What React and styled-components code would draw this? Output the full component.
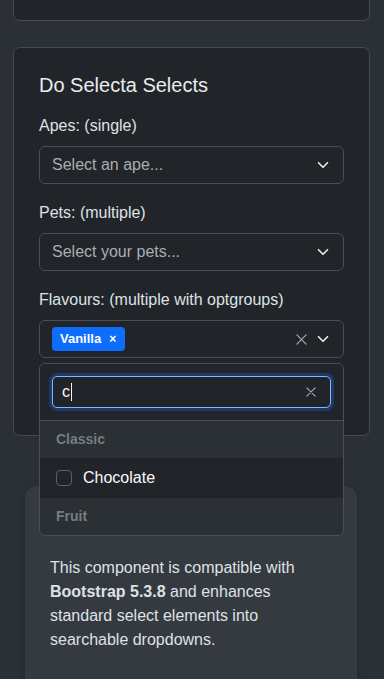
import React from 'react';
import styled, { createGlobalStyle } from 'styled-components';

const GlobalStyle = createGlobalStyle`
  html, body {
    margin: 0;
    padding: 0;
    background-color: #2b3037;
  }
  body {
    font-family: "Liberation Sans", Arial, sans-serif;
    color: #dee2e6;
    font-size: 16px;
    line-height: 1.5;
  }
`;

const Page = styled.div`
  padding: 1px 14px 0 13px;
  height: 679px;
  box-sizing: border-box;
  overflow: hidden;
`;

const Card = styled.div`
  background-color: #212529;
  border: 1px solid #454a50;
  border-radius: 7px;
  box-sizing: border-box;
`;

// the card above, scrolled mostly out of view
const PrevCard = styled(Card)`
  height: 61px;
  margin-top: -41px;
  margin-bottom: 26px;
`;

const CardBody = styled.div`
  padding: 25px 25px 77px 25px;
`;

const Title = styled.h5`
  margin: 0 0 17px 0;
  font-size: 20px;
  font-weight: 500;
  line-height: 24px;
  color: #e9ecef;
`;

const Field = styled.div`
  position: relative;
  margin-bottom: ${({ last }) => (last ? '0' : '17px')};
`;

const Label = styled.label`
  display: block;
  margin-bottom: 8px;
  line-height: 24px;
  color: #dee2e6;
`;

const SelectBox = styled.div`
  height: 38px;
  box-sizing: border-box;
  border: 1px solid #4a4f55;
  border-radius: 6px;
  background-color: #212529;
  display: flex;
  align-items: center;
  padding: 0 14px 0 12px;
  gap: 10px;
`;

const Placeholder = styled.span`
  flex: 1;
  color: #a9adb2;
`;

const Tags = styled.div`
  flex: 1;
  display: flex;
  align-items: center;
`;

const Tag = styled.span`
  display: inline-flex;
  align-items: center;
  height: 24px;
  padding: 0 9px 0 8px;
  gap: 8px;
  border-radius: 4px;
  background-color: #0d6efd;
  color: #ffffff;
  font-size: 13px;
  font-weight: 700;
`;

const TagX = styled.span`
  font-size: 12px;
  font-weight: 700;
  line-height: 1;
`;

const IconBtn = styled.span`
  display: inline-flex;
  align-items: center;
  justify-content: center;
  color: ${({ muted }) => (muted ? '#a3a8ad' : '#e9ecef')};
`;

const Dropdown = styled.div`
  position: absolute;
  top: calc(100% + 5px);
  left: 0;
  right: 0;
  z-index: 10;
  border: 1px solid #4a4f55;
  border-radius: 6px;
  background-color: #2b3035;
  overflow: hidden;
`;

const SearchArea = styled.div`
  padding: 12px;
  background-color: #212529;
  border-bottom: 1px solid #4a4f55;
`;

const SearchInput = styled.div`
  height: 32px;
  box-sizing: border-box;
  border: 1px solid #86b7fe;
  border-radius: 5px;
  box-shadow: 0 0 0 3px rgba(13, 110, 253, 0.3);
  background-color: #212529;
  display: flex;
  align-items: center;
  padding: 0 14px 0 9px;
  color: #f8f9fa;
`;

const Typed = styled.span`
  flex: 1;
  display: flex;
  align-items: center;
  &::after {
    content: '';
    display: inline-block;
    width: 1px;
    height: 18px;
    margin-left: 1px;
    background-color: #f8f9fa;
  }
`;

const GroupHeader = styled.div`
  height: 37px;
  display: flex;
  align-items: center;
  padding: 0 16px;
  font-size: 14px;
  font-weight: 700;
  color: #777c83;
`;

const Option = styled.div`
  height: 40px;
  display: flex;
  align-items: center;
  gap: 11px;
  padding: 0 16px;
  background-color: ${({ active }) => (active ? '#212529' : 'transparent')};
  color: #f8f9fa;
`;

const Check = styled.span`
  width: 16px;
  height: 16px;
  box-sizing: border-box;
  border: 1px solid #5b6066;
  border-radius: 4px;
  background-color: #212529;
`;

const Info = styled.div`
  margin: 50px 13px 0 12px;
  padding: 70px 24px 24px 25px;
  background-color: #343a40;
  border-radius: 12px;
  box-shadow: 0 0 6px rgba(0, 0, 0, 0.15);
  line-height: 24px;
  color: #dee2e6;
  min-height: 200px;
`;

const Strong = styled.strong`
  font-weight: 700;
`;

const Chevron = () => (
  <svg width="12" height="12" viewBox="0 0 16 16" fill="none">
    <path d="m2 5 6 6 6-6" stroke="currentColor" strokeWidth="2.2" strokeLinecap="round" strokeLinejoin="round" />
  </svg>
);

const Cross = ({ size = 11 }) => (
  <svg width={size} height={size} viewBox="0 0 12 12" fill="none">
    <path d="M1 1l10 10M11 1L1 11" stroke="currentColor" strokeWidth="1.4" strokeLinecap="round" />
  </svg>
);

const App = () => (
  <>
    <GlobalStyle />
    <Page>
      <PrevCard />
      <Card>
        <CardBody>
          <Title>Do Selecta Selects</Title>

          <Field>
            <Label>Apes: (single)</Label>
            <SelectBox>
              <Placeholder>Select an ape...</Placeholder>
              <IconBtn><Chevron /></IconBtn>
            </SelectBox>
          </Field>

          <Field>
            <Label>Pets: (multiple)</Label>
            <SelectBox>
              <Placeholder>Select your pets...</Placeholder>
              <IconBtn><Chevron /></IconBtn>
            </SelectBox>
          </Field>

          <Field last>
            <Label>Flavours: (multiple with optgroups)</Label>
            <SelectBox>
              <Tags>
                <Tag>
                  Vanilla
                  <TagX>×</TagX>
                </Tag>
              </Tags>
              <IconBtn muted><Cross /></IconBtn>
              <IconBtn><Chevron /></IconBtn>
            </SelectBox>

            <Dropdown>
              <SearchArea>
                <SearchInput>
                  <Typed>c</Typed>
                  <IconBtn muted><Cross size={10} /></IconBtn>
                </SearchInput>
              </SearchArea>
              <GroupHeader>Classic</GroupHeader>
              <Option active>
                <Check />
                Chocolate
              </Option>
              <GroupHeader>Fruit</GroupHeader>
            </Dropdown>
          </Field>
        </CardBody>
      </Card>

      <Info>
        This component is compatible with <Strong>Bootstrap 5.3.8</Strong> and enhances
        standard select elements into searchable dropdowns.
      </Info>
    </Page>
  </>
);

export default App;
